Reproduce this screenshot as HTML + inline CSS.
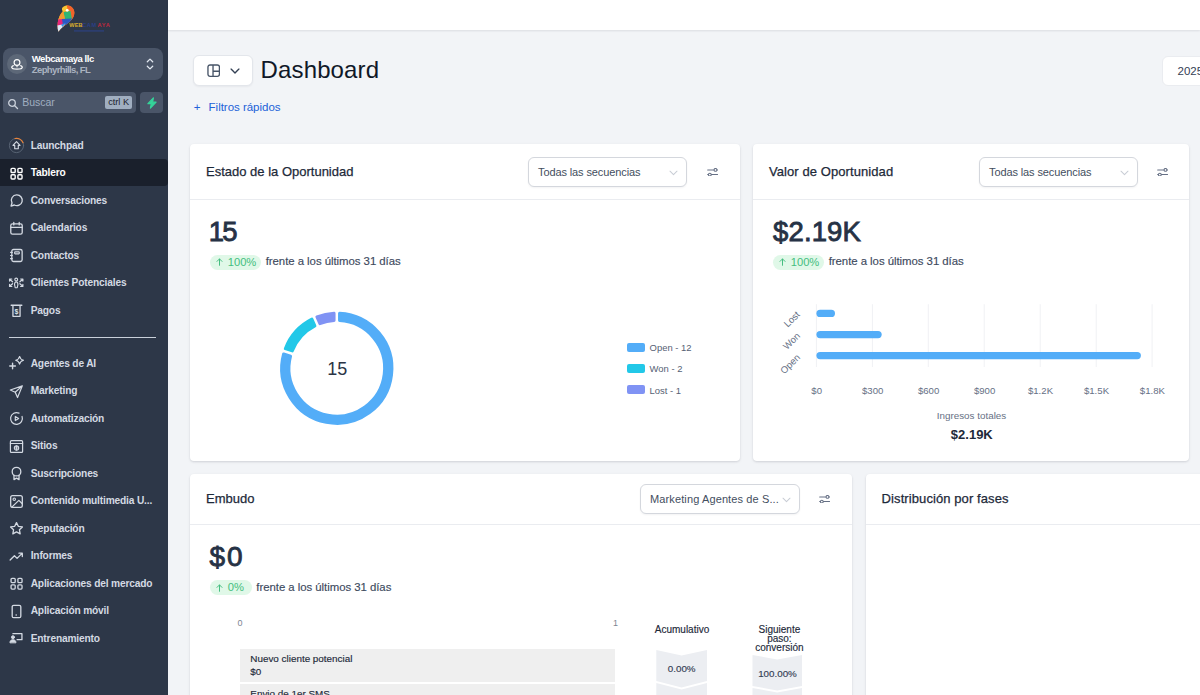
<!DOCTYPE html>
<html lang="es">
<head>
<meta charset="utf-8">
<title>Dashboard</title>
<style>
*{box-sizing:border-box;margin:0;padding:0}
html,body{width:1200px;height:695px;overflow:hidden;background:#f2f4f7;font-family:"Liberation Sans",sans-serif;color:#101828}
.abs{position:absolute}
#sidebar{position:absolute;left:0;top:0;width:168px;height:695px;background:#2d3748;color:#e2e8f0}
#topbar{position:absolute;left:168px;top:0;width:1032px;height:30px;background:#fff;box-shadow:0 1px 2px rgba(16,24,40,.10)}
#main{position:absolute;left:168px;top:30px;width:1032px;height:665px;background:#f2f4f7;z-index:0}
/* sidebar */
.acct{position:absolute;left:3.200px;top:48.300px;width:159.500px;height:31.500px;background:#4a5568;border-radius:8px}
.acct .av{position:absolute;left:4px;top:6px;width:20px;height:20px;border-radius:50%;background:#5d6878}
.acct .n1{position:absolute;left:28.600px;top:4.800px;font-size:9.500px;font-weight:700;color:#fff;white-space:nowrap;letter-spacing:-.460px}
.acct .n2{position:absolute;left:28.600px;top:16px;font-size:9.500px;font-weight:700;color:#aab3c0;white-space:nowrap;letter-spacing:-.610px}
.logo{position:absolute;left:55px;top:2px}
.acct .ud{position:absolute;left:143px;top:9px}
.srch{position:absolute;left:3.200px;top:92px;width:133.200px;height:21px;background:#4a5568;border-radius:4px}
.srch .ph{position:absolute;left:19px;top:4px;font-size:10.500px;color:#a0aec0}
.srch .kbd{position:absolute;left:101.800px;top:4px;width:27.300px;height:12.500px;background:#a0aec0;border-radius:2px;color:#1a202c;font-size:9.200px;line-height:12.500px;text-align:center;white-space:nowrap}
.bolt{position:absolute;left:140.200px;top:92px;width:22.500px;height:21px;background:#4a5568;border-radius:4px}
.nav{position:absolute;left:0;width:168px;height:27px}
.nav.on{background:#1a202c;border-radius:0 4px 4px 0;color:#fff}
.nav span{position:absolute;left:30.700px;top:8.100px;font-size:10.200px;font-weight:700;white-space:nowrap;letter-spacing:-.170px;color:#d4dae3}
.nav.on span{color:#fff}
.nav svg{position:absolute;left:9px;top:6.600px;width:15px;height:15px;fill:none;stroke:#d3d9e2;stroke-width:1.6;stroke-linecap:round;stroke-linejoin:round}
.sdiv{position:absolute;left:9px;top:337px;width:147px;height:1px;background:#c9d0da}
/* main */
.card{position:absolute;background:#fff;border-radius:4px;box-shadow:0 1px 3px rgba(16,24,40,.10),0 1px 2px rgba(16,24,40,.06)}
.card .hd{position:absolute;left:0;top:0;right:0;height:56px;border-bottom:1px solid #eaecf0}
.card .tt{position:absolute;left:16px;top:19.500px;font-size:13px;font-weight:400;color:#1d2939;white-space:nowrap;-webkit-text-stroke:.250px #1d2939}
.sel{position:absolute;top:13px;height:30px;border:1px solid #d4d7dd;border-radius:6px;background:#fff;box-shadow:0 1px 2px rgba(16,24,40,.05)}
.sel span{position:absolute;left:9px;top:8px;font-size:11px;letter-spacing:-.110px;color:#434e60;white-space:nowrap}
.big{position:absolute;font-size:27.500px;font-weight:400;color:#263245;white-space:nowrap;-webkit-text-stroke:.850px #263245}
.pill{position:absolute;height:15px;border-radius:7.500px;background:#e0f8e8;color:#45be80;font-size:11.200px;line-height:15px;white-space:nowrap}
.pill svg{position:absolute;left:6px;top:3.500px}
.pill b{position:absolute;left:18.200px;top:0;font-weight:400}
.vs{position:absolute;font-size:11.400px;letter-spacing:-.040px;color:#3d4a5e;white-space:nowrap;-webkit-text-stroke:.150px #3d4a5e}
.lg{font-size:9.450px;color:#566174;white-space:nowrap;margin-top:.500px}
.ax{font-size:9px;color:#7d8592}
.frow{background:#efefef;font-size:9.900px;color:#1d2939;white-space:nowrap;-webkit-text-stroke:.150px #1d2939}
.fh{font-size:10px;line-height:9.400px;-webkit-text-stroke:.150px #1d2939;color:#1d2939;text-align:center}
</style>
</head>
<body>
<div id="sidebar">
  <div class="logo">
    <svg viewBox="0 0 60 32" width="60" height="32">
      <defs><clipPath id="pc"><path d="M9 4.600C11 3.200 14 3.200 16 4.600 19 6.500 20 10 19 13.500 18 16.500 15.500 19.500 12 22 8.500 24.500 5.500 26.500 3.400 29.800 2.200 26 2.200 21 3.500 17 4.500 13.500 6.500 10.800 8 9 7.200 8.500 6.800 7.500 7 6.500 7.500 5.800 8.200 5 9 4.600z"/></clipPath></defs>
      <g clip-path="url(#pc)">
        <rect x="0" y="0" width="24" height="32" fill="#f08a2c"/>
        <polygon points="5,3 12.500,3 12,9.500 5,10" fill="#f6c734"/>
        <polygon points="11.500,3 21,3 21,17 16.500,17 15.500,9 12.500,6" fill="#f2622a"/>
        <polygon points="8.500,10 15.500,9 16.800,17 10,17.500" fill="#2fb574"/>
        <polygon points="2,11 8.500,10 10,17.500 2,18.500" fill="#f29a2e"/>
        <polygon points="6.500,17 17,16.500 14,22 7.500,23.500" fill="#2c58c4"/>
        <polygon points="2,17.500 7,17 8,24 2,24.500" fill="#e8257c"/>
        <polygon points="2,23.500 10,22 5,31 2,31" fill="#dce9f8"/>
        <polygon points="6,22.500 11,21 7.500,25" fill="#3f8fe0"/>
        <circle cx="12.200" cy="8.300" r="1.400" fill="#fff"/>
      </g>
      <text x="14.300" y="25.200" font-family="Liberation Sans" font-weight="700" font-size="5.600" fill="#d9ad2c" letter-spacing=".1">WEB</text>
      <text x="27.300" y="25.200" font-family="Liberation Sans" font-weight="700" font-size="5.600" fill="#2b3f85" letter-spacing=".5">CAM</text>
      <text x="42.500" y="25.200" font-family="Liberation Sans" font-weight="700" font-size="5.600" fill="#c0283e" letter-spacing=".7">AYA</text>
      <rect x="19" y="28.500" width="30" height=".9" fill="#2c4494"/>
    </svg>
  </div>
  <div class="acct"><div class="av"><svg viewBox="0 0 20 20" width="20" height="20"><circle cx="10" cy="8.500" r="2.900" fill="none" stroke="#fff" stroke-width="1.200"/><path d="M6.300 11.600c-1 .4-1.600 1-1.600 1.700 0 1.200 2.200 1.900 5.300 1.900s5.300-.7 5.300-1.900c0-.7-.6-1.300-1.600-1.700" fill="none" stroke="#fff" stroke-width="1.200" stroke-linecap="round"/><path d="M10 11.400v1.800" stroke="#fff" stroke-width="1.100"/></svg></div><div class="n1">Webcamaya llc</div><div class="n2">Zephyrhills, FL</div>
    <svg class="ud" viewBox="0 0 8 14" width="8" height="14"><path d="M1.300 4.800 4 2.100l2.700 2.700M1.300 9.200 4 11.900l2.700-2.700" fill="none" stroke="#e2e8f0" stroke-width="1.300" stroke-linecap="round" stroke-linejoin="round"/></svg>
  </div>
  <div class="srch"><svg viewBox="0 0 12 12" width="12" height="12" style="position:absolute;left:3.500px;top:5.500px"><circle cx="5" cy="5" r="3.300" fill="none" stroke="#cbd2dc" stroke-width="1.300"/><path d="M7.500 7.500l3 3" stroke="#cbd2dc" stroke-width="1.400" stroke-linecap="round"/></svg><div class="ph">Buscar</div><div class="kbd">ctrl K</div></div>
  <div class="bolt"><svg viewBox="0 0 12 12" width="12" height="12" style="position:absolute;left:5.500px;top:5px"><path d="M7.400.900 1.900 6.700h3.400L4.400 11.100l5.700-5.900H6.600z" fill="#34d399" stroke="#34d399" stroke-width="1.200" stroke-linejoin="round"/></svg></div>
  <div class="nav" style="top:131.8px"><svg viewBox="0 0 16 16" style="overflow:visible"><circle cx="8" cy="8" r="7.600" stroke="#5b6676" stroke-width="1"/><path d="M6.500 .55A7.600 7.600 0 0 1 15 5" stroke="#e8833a" stroke-width="1.300"/><path d="M8 3.900 11.800 7.800H9.900v3.600H6.100V7.800H4.200z" stroke-width="1.200"/></svg><span>Launchpad</span></div>
  <div class="nav on" style="top:159.3px"><svg viewBox="0 0 16 16" style="stroke:#fff;stroke-width:1.5"><rect x="2.2" y="2.5" width="4.4" height="4.5" rx="1"/><rect x="9.5" y="2.5" width="4.4" height="4.5" rx="1"/><rect x="2.2" y="9.4" width="4.4" height="4.5" rx="1"/><rect x="9.5" y="9.4" width="4.4" height="4.500" rx="1"/></svg><span>Tablero</span></div>
  <div class="nav" style="top:186.8px"><svg viewBox="0 0 16 16"><path d="M8.4 2.1a5.7 5.7 0 1 1-2.7 10.7L2.2 13.9l1-3.3A5.7 5.7 0 0 1 8.4 2.1z" stroke-width="1.4"/></svg><span>Conversaciones</span></div>
  <div class="nav" style="top:214.3px"><svg viewBox="0 0 16 16"><rect x="1.9" y="3" width="12.2" height="11" rx="1.8" stroke-width="1.4"/><path d="M1.9 6.8h12.2M5.1 1.6v2.6M10.9 1.6v2.6" stroke-width="1.4"/></svg><span>Calendarios</span></div>
  <div class="nav" style="top:241.8px"><svg viewBox="0 0 16 16"><rect x="3" y="1.6" width="11" height="12.8" rx="1.8" stroke-width="1.4"/><rect x="6" y="4.1" width="5" height="2.2" rx=".6" stroke-width="1.2"/><path d="M1.6 4.6h2M1.6 8h2M1.6 11.4h2" stroke-width="1.2"/></svg><span>Contactos</span></div>
  <div class="nav" style="top:269.3px"><svg viewBox="0 0 16 16" style="overflow:visible"><circle cx="7.7" cy="3.700" r="1.500" stroke-width="1.200"/><path d="M5.900 9.200c0-2 .7-3 1.800-3s1.800 1 1.800 3l-.7 3.300H6.600z" stroke-width="1.200"/><path d="M3.800 6.200.7 3.400M.6 5.400V3.200H3M3.800 8.200.7 11M.6 9v2.200H3M11.600 6.200l3.100-2.800M14.800 5.400V3.200h-2.400M11.600 8.200l3.100 2.800M14.800 9v2.200h-2.400" stroke-width="1.300"/></svg><span>Clientes Potenciales</span></div>
  <div class="nav" style="top:296.8px"><svg viewBox="0 0 16 16"><path d="M2.3 2.4h11.4M4.2 2.4v11.8h7.6V2.4" stroke-width="1.4"/><text x="8" y="11.2" font-size="7.5" font-weight="700" text-anchor="middle" fill="#dfe5ee" stroke="none" font-family="Liberation Sans">$</text></svg><span>Pagos</span></div>
  <div class="sdiv"></div>
  <div class="nav" style="top:349.7px"><svg viewBox="0 0 16 16"><path d="M3.8 7.6v6M.8 10.6h6" stroke-width="1.5"/><path d="M11.300 .3c.6 2.700 1.400 3.500 4.200 4.200-2.800.7-3.600 1.500-4.200 4.200-.6-2.700-1.400-3.500-4.200-4.200 2.800-.7 3.600-1.500 4.200-4.200z" stroke-width="1.200"/></svg><span>Agentes de AI</span></div>
  <div class="nav" style="top:377.2px"><svg viewBox="0 0 16 16"><path d="M14.200 2 1.400 6.400l5.200 2.400 2.500 5.600zM6.600 8.800 14.200 2" stroke-width="1.3"/></svg><span>Marketing</span></div>
  <div class="nav" style="top:404.7px"><svg viewBox="0 0 16 16"><path d="M10.66 2.29A6.3 6.3 0 1 0 13.92 5.85" stroke-width="1.300"/><path d="M6.700 5.800v4.400L10.300 8z" stroke-width="1.200"/><path d="M12.300 1.100v2.600h2.300" stroke-width="1.100" style="display:none"/></svg><span>Automatización</span></div>
  <div class="nav" style="top:432.2px"><svg viewBox="0 0 16 16"><rect x="1.500" y="1.800" width="13" height="12.400" rx="1" stroke-width="1.300"/><path d="M1.500 4.800h13" stroke-width="1.300"/><circle cx="8" cy="9.600" r="2.300" stroke-width="1.200"/><path d="M5.700 9.600h4.600M8 7.300v4.600" stroke-width="1"/></svg><span>Sitios</span></div>
  <div class="nav" style="top:459.7px"><svg viewBox="0 0 16 16"><circle cx="8" cy="6" r="4.600" stroke-width="1.400"/><path d="M5.300 9.800v4.700L8 13l2.700 1.500V9.800" stroke-width="1.400"/></svg><span>Suscripciones</span></div>
  <div class="nav" style="top:487.2px"><svg viewBox="0 0 16 16"><rect x="1.800" y="1.800" width="12.400" height="12.400" rx="2" stroke-width="1.400"/><circle cx="5.600" cy="5.600" r="1.300" stroke-width="1.200"/><path d="M3 14 10.500 6.800l3.700 3.500" stroke-width="1.400"/></svg><span>Contenido multimedia U...</span></div>
  <div class="nav" style="top:514.7px"><svg viewBox="0 0 16 16"><path d="M8 1.700l1.950 3.950 4.350.65-3.150 3.050.75 4.350L8 11.650 4.100 13.700l.75-4.350L1.700 6.300l4.350-.65z" stroke-width="1.400"/></svg><span>Reputación</span></div>
  <div class="nav" style="top:542.2px"><svg viewBox="0 0 16 16"><path d="M1.200 11.800 5.800 7.200l2.800 2.800 5.600-5.600M10.600 4.400h3.600V8" stroke-width="1.400"/></svg><span>Informes</span></div>
  <div class="nav" style="top:569.7px"><svg viewBox="0 0 16 16" style="stroke-width:1.400"><rect x="2.2" y="2.5" width="4.4" height="4.5" rx="1"/><rect x="9.5" y="2.5" width="4.4" height="4.5" rx="1"/><rect x="2.2" y="9.4" width="4.4" height="4.5" rx="1"/><rect x="9.5" y="9.4" width="4.4" height="4.500" rx="1"/></svg><span>Aplicaciones del mercado</span></div>
  <div class="nav" style="top:597.2px"><svg viewBox="0 0 16 16"><rect x="3.400" y="1.400" width="9.200" height="13.200" rx="1.600" stroke-width="1.400"/><path d="M7.600 11.800h.1" stroke-width="1.600"/></svg><span>Aplicación móvil</span></div>
  <div class="nav" style="top:624.7px"><svg viewBox="0 0 16 16"><path d="M4.200 2.800h9.600v6.400H8.600" stroke-width="1.400"/><circle cx="4.200" cy="6.600" r="1.600" fill="#d3d9e2" stroke-width="1"/><path d="M1 12.200c0-1.900 1.300-2.900 3.200-2.900s3.200 1 3.200 2.900z" fill="#d3d9e2" stroke-width="1"/></svg><span>Entrenamiento</span></div>
</div>
<div id="main"></div>
<div id="topbar"></div>

<!-- header -->
<div class="abs" id="viewbtn" style="left:193.300px;top:55.300px;width:60px;height:30.400px;background:#fff;border:1px solid #e3e6eb;border-radius:6px;box-shadow:0 1px 2px rgba(16,24,40,.05)"><svg class="abs" style="left:12.300px;top:8px" width="13.400" height="13.400" viewBox="0 0 14 14"><rect x="1" y="1" width="12" height="12" rx="2.200" fill="none" stroke="#475467" stroke-width="1.400"/><path d="M6.300 1v12M6.300 7.600H13" fill="none" stroke="#475467" stroke-width="1.400"/></svg><svg class="abs" style="left:35.300px;top:11.300px" width="10" height="6.400" viewBox="0 0 11 7"><path d="M1.200 1.200 5.500 5.500 9.800 1.200" fill="none" stroke="#344054" stroke-width="1.500" stroke-linecap="round" stroke-linejoin="round"/></svg></div>
<div class="abs" id="title" style="left:260.500px;top:54.800px;font-size:24px;letter-spacing:.150px;line-height:30px;color:#101828;white-space:nowrap">Dashboard</div>
<div class="abs" id="datebox" style="left:1161.500px;top:55.500px;width:60px;height:30px;background:#fff;border:1px solid #eaecf0;border-radius:6px"><span style="position:absolute;left:15px;top:8px;font-size:11.5px;color:#344054">2025</span></div>
<div class="abs" id="filt" style="left:193.800px;top:100.800px;font-size:11.500px;color:#2161d8;white-space:nowrap">+</div><div class="abs" style="left:208.600px;top:100.800px;font-size:11.500px;color:#2161d8;white-space:nowrap;letter-spacing:-.020px">Filtros rápidos</div>

<!-- card 1 -->
<div class="card" id="c1" style="left:190px;top:144px;width:550px;height:317px">
  <div class="hd"><div class="tt">Estado de la Oportunidad</div>
    <div class="sel" style="left:338px;width:159px"><span>Todas las secuencias</span><svg class="abs" style="right:8.500px;top:11.500px" width="9" height="6" viewBox="0 0 9 6"><path d="M1 1.200 4.500 4.700 8 1.200" fill="none" stroke="#c9cdd5" stroke-width="1.050" stroke-linecap="round" stroke-linejoin="round"/></svg></div>
  </div>
  <div class="big" style="left:18.800px;top:72px;letter-spacing:-1.800px">15</div>
  <div class="pill" style="left:19.500px;top:110.700px;width:51.500px"><svg width="7" height="8" viewBox="0 0 7 8"><path d="M3.500 7.300V1M1 3.400 3.500.900 6 3.400" fill="none" stroke="#45be80" stroke-width="1" stroke-linecap="round" stroke-linejoin="round"/></svg><b>100%</b></div>
  <div class="vs" style="left:75.700px;top:110.500px">frente a los últimos 31 días</div>
  <svg class="abs" style="left:516.5px;top:23.5px" width="11.300" height="8.500" viewBox="0 0 12 9"><path d="M.700 2h6.600M.700 7h.6M4.700 7h6.600M10.700 2h.6" fill="none" stroke="#667085" stroke-width="1.100" stroke-linecap="round"/><circle cx="9" cy="2" r="1.500" fill="none" stroke="#667085" stroke-width="1.100"/><circle cx="3" cy="7" r="1.500" fill="none" stroke="#667085" stroke-width="1.100"/></svg>
  <svg class="abs" style="left:0;top:0" width="550" height="317" viewBox="0 0 550 317"><path d="M149.55 169.27A55.10 55.10 0 1 1 93.61 209.91L100.57 212.17A47.80 47.80 0 1 0 149.55 176.58Z" fill="#53adf8" stroke="#53adf8" stroke-width="3.0" stroke-linejoin="round"/><path d="M95.31 204.68A55.10 55.10 0 0 1 121.91 175.14L124.88 181.82A47.80 47.80 0 0 0 102.26 206.94Z" fill="#22c8e8" stroke="#22c8e8" stroke-width="3.0" stroke-linejoin="round"/><path d="M126.93 172.91A55.10 55.10 0 0 1 144.05 169.27L144.05 176.58A47.80 47.80 0 0 0 129.90 179.59Z" fill="#8093f4" stroke="#8093f4" stroke-width="3.0" stroke-linejoin="round"/><text x="147.2" y="230.7" text-anchor="middle" font-family="Liberation Sans" font-size="18" fill="#2b3445">15</text></svg><div class="abs" style="left:437.300px;top:198.7px;width:17.600px;height:9px;border-radius:2px;background:#53adf8"></div><div class="abs lg" style="left:459.600px;top:197.5px">Open - 12</div><div class="abs" style="left:437.300px;top:220.0px;width:17.600px;height:9px;border-radius:2px;background:#22c8e8"></div><div class="abs lg" style="left:459.600px;top:218.8px">Won - 2</div><div class="abs" style="left:437.300px;top:241.3px;width:17.600px;height:9px;border-radius:2px;background:#8093f4"></div><div class="abs lg" style="left:459.600px;top:240.1px">Lost - 1</div>
</div>

<!-- card 2 -->
<div class="card" id="c2" style="left:753px;top:144px;width:436px;height:317px">
  <div class="hd"><div class="tt" style="letter-spacing:.080px">Valor de Oportunidad</div>
    <div class="sel" style="left:226px;width:159px"><span>Todas las secuencias</span><svg class="abs" style="right:8.500px;top:11.500px" width="9" height="6" viewBox="0 0 9 6"><path d="M1 1.200 4.500 4.700 8 1.200" fill="none" stroke="#c9cdd5" stroke-width="1.050" stroke-linecap="round" stroke-linejoin="round"/></svg></div>
  </div>
  <div class="big" style="left:20px;top:72px;letter-spacing:.150px">$2.19K</div>
  <div class="pill" style="left:19.500px;top:110.700px;width:51.500px"><svg width="7" height="8" viewBox="0 0 7 8"><path d="M3.500 7.300V1M1 3.400 3.500.900 6 3.400" fill="none" stroke="#45be80" stroke-width="1" stroke-linecap="round" stroke-linejoin="round"/></svg><b>100%</b></div>
  <div class="vs" style="left:75.700px;top:110.500px">frente a los últimos 31 días</div>
  <svg class="abs" style="left:403.5px;top:23.5px" width="11.300" height="8.500" viewBox="0 0 12 9"><path d="M.700 2h6.600M.700 7h.6M4.700 7h6.600M10.700 2h.6" fill="none" stroke="#667085" stroke-width="1.100" stroke-linecap="round"/><circle cx="9" cy="2" r="1.500" fill="none" stroke="#667085" stroke-width="1.100"/><circle cx="3" cy="7" r="1.500" fill="none" stroke="#667085" stroke-width="1.100"/></svg>
  <svg class="abs" style="left:0;top:0" width="436" height="317" viewBox="0 0 436 317"><path d="M63.4 160.2V223.0" stroke="#f0f1f4" stroke-width="1"/><path d="M119.4 160.2V223.0" stroke="#f0f1f4" stroke-width="1"/><path d="M175.3 160.2V223.0" stroke="#f0f1f4" stroke-width="1"/><path d="M231.2 160.2V223.0" stroke="#f0f1f4" stroke-width="1"/><path d="M287.2 160.2V223.0" stroke="#f0f1f4" stroke-width="1"/><path d="M343.2 160.2V223.0" stroke="#f0f1f4" stroke-width="1"/><path d="M399.1 160.2V223.0" stroke="#f0f1f4" stroke-width="1"/><rect x="63.4" y="165.7" width="18.6" height="7.400" rx="3.700" fill="#53adf8"/><rect x="63.4" y="186.9" width="65.3" height="7.400" rx="3.700" fill="#53adf8"/><rect x="63.4" y="207.9" width="324.5" height="7.400" rx="3.700" fill="#53adf8"/><text transform="translate(45.1 168.8) rotate(-45)" text-anchor="end" font-family="Liberation Sans" font-size="9.500" fill="#667085" dy="3.300">Lost</text><text transform="translate(45.4 190.2) rotate(-45)" text-anchor="end" font-family="Liberation Sans" font-size="9.500" fill="#667085" dy="3.300">Won</text><text transform="translate(45.4 211.6) rotate(-45)" text-anchor="end" font-family="Liberation Sans" font-size="9.500" fill="#667085" dy="3.300">Open</text><text x="63.7" y="250.2" text-anchor="middle" font-family="Liberation Sans" font-size="9.600" fill="#667085">$0</text><text x="119.7" y="250.2" text-anchor="middle" font-family="Liberation Sans" font-size="9.600" fill="#667085">$300</text><text x="175.6" y="250.2" text-anchor="middle" font-family="Liberation Sans" font-size="9.600" fill="#667085">$600</text><text x="231.6" y="250.2" text-anchor="middle" font-family="Liberation Sans" font-size="9.600" fill="#667085">$900</text><text x="287.5" y="250.2" text-anchor="middle" font-family="Liberation Sans" font-size="9.600" fill="#667085">$1.2K</text><text x="343.5" y="250.2" text-anchor="middle" font-family="Liberation Sans" font-size="9.600" fill="#667085">$1.5K</text><text x="399.4" y="250.2" text-anchor="middle" font-family="Liberation Sans" font-size="9.600" fill="#667085">$1.8K</text><text x="218.5" y="275.0" text-anchor="middle" font-family="Liberation Sans" font-size="9.850" fill="#667085">Ingresos totales</text><text x="218.8" y="295.3" text-anchor="middle" font-family="Liberation Sans" font-size="13" font-weight="700" fill="#1d2939">$2.19K</text></svg>
</div>

<!-- card 3 -->
<div class="card" id="c3" style="left:190px;top:474px;width:662px;height:240px">
  <div class="hd" style="height:51px"><div class="tt" style="top:17px">Embudo</div>
    <div class="sel" style="left:450px;width:160px;top:10px"><span style="letter-spacing:.120px">Marketing Agentes de S...</span><svg class="abs" style="right:8.500px;top:11.500px" width="9" height="6" viewBox="0 0 9 6"><path d="M1 1.200 4.500 4.700 8 1.200" fill="none" stroke="#c9cdd5" stroke-width="1.050" stroke-linecap="round" stroke-linejoin="round"/></svg></div>
  </div>
  <div class="big" style="left:19.500px;top:66.500px;letter-spacing:2px;font-size:28px">$0</div>
  <div class="pill" style="left:19.500px;top:106.300px;width:42.600px"><svg width="7" height="8" viewBox="0 0 7 8"><path d="M3.500 7.300V1M1 3.400 3.500.900 6 3.400" fill="none" stroke="#45be80" stroke-width="1" stroke-linecap="round" stroke-linejoin="round"/></svg><b>0%</b></div>
  <div class="vs" style="left:66.300px;top:107.300px">frente a los últimos 31 días</div>
  <svg class="abs" style="left:629px;top:20.5px" width="11.300" height="8.500" viewBox="0 0 12 9"><path d="M.700 2h6.600M.700 7h.6M4.700 7h6.600M10.700 2h.6" fill="none" stroke="#667085" stroke-width="1.100" stroke-linecap="round"/><circle cx="9" cy="2" r="1.500" fill="none" stroke="#667085" stroke-width="1.100"/><circle cx="3" cy="7" r="1.500" fill="none" stroke="#667085" stroke-width="1.100"/></svg>
  <div class="abs ax" style="left:47.5px;top:144px">0</div><div class="abs ax" style="left:423px;top:144px">1</div><div class="abs frow" style="left:50px;top:175px;width:375px;height:33px"><div class="abs" style="left:10.300px;top:3.900px">Nuevo cliente potencial</div><div class="abs" style="left:10.300px;top:16.900px">$0</div></div><div class="abs frow" style="left:50px;top:209.70000000000005px;width:375px;height:33px"><div class="abs" style="left:10.300px;top:3.900px">Envio de 1er SMS</div></div><div class="abs fh" style="left:452px;top:150.5px;width:80px">Acumulativo</div><div class="abs fh" style="left:549.4px;top:150.5px;width:80px">Siguiente<br>paso:<br>conversión</div><svg class="abs" style="left:0;top:0" width="662" height="240" viewBox="0 0 662 240"><path d="M466.3 176.0L491.6 181.5L517.0 176.0V207.0L491.6 213.5L466.3 207.0Z" fill="#eceef2"/><path d="M466.3 209.0L491.6 215.5L517.0 209.0V242.0L491.6 248.5L466.3 242.0Z" fill="#eceef2"/><path d="M562.5 181.0L587.2 185.5L612.0 181.0V212.0L587.2 216.5L562.5 212.0Z" fill="#eceef2"/><path d="M562.5 214.0L587.2 218.5L612.0 214.0V246.0L587.2 250.5L562.5 246.0Z" fill="#eceef2"/><text x="491.7" y="198.2" text-anchor="middle" font-family="Liberation Sans" font-size="9.800" fill="#344054" stroke="#344054" stroke-width=".150">0.00%</text><text x="587.5" y="202.7" text-anchor="middle" font-family="Liberation Sans" font-size="9.800" fill="#344054" stroke="#344054" stroke-width=".150">100.00%</text></svg>
</div>

<!-- card 4 -->
<div class="card" id="c4" style="left:866px;top:474px;width:340px;height:240px">
  <div class="hd" style="height:51px"><div class="tt" style="top:17px;left:15.600px;letter-spacing:.090px">Distribución por fases</div></div>
</div>
</body>
</html>
